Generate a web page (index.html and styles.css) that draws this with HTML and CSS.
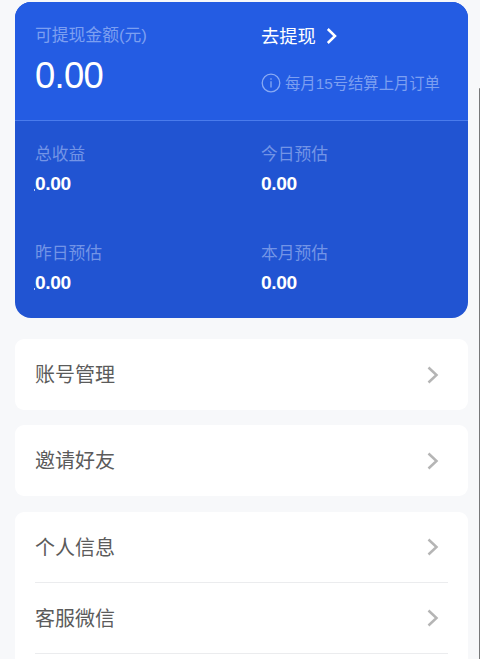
FILE: index.html
```html
<!DOCTYPE html>
<html lang="zh-CN">
<head>
<meta charset="utf-8">
<title>我的收益</title>
<link rel="stylesheet" href="styles.css">
</head>
<body>
<main class="page">
  <section class="wallet">
    <div class="wallet-top">
      <div class="balance">
        <div class="label">可提现金额(元)</div>
        <div class="amount">0.00</div>
      </div>
      <div class="withdraw">
        <div class="withdraw-link">去提现
          <svg class="go" viewBox="0 0 12 18"><path d="M1.8 2l7.2 7-7.2 7"/></svg>
        </div>
        <div class="tip">
          <svg class="info" viewBox="0 0 20 20"><circle cx="10" cy="10" r="8.8"/><path d="M10 8.2v6.4M10 5.2v1.6"/></svg>
          <span>每月15号结算上月订单</span>
        </div>
      </div>
    </div>
    <div class="stats">
      <div class="stat"><div class="label">总收益</div><div class="value dotted">0.00</div></div>
      <div class="stat"><div class="label">今日预估</div><div class="value">0.00</div></div>
      <div class="stat"><div class="label">昨日预估</div><div class="value dotted">0.00</div></div>
      <div class="stat"><div class="label">本月预估</div><div class="value">0.00</div></div>
    </div>
  </section>
  <section class="menu">
    <div class="row"><span>账号管理</span><svg class="arrow" viewBox="0 0 12 18"><path d="M1.5 1.5L9.5 9l-8 7.5"/></svg></div>
  </section>
  <section class="menu">
    <div class="row"><span>邀请好友</span><svg class="arrow" viewBox="0 0 12 18"><path d="M1.5 1.5L9.5 9l-8 7.5"/></svg></div>
  </section>
  <section class="menu menu-long">
    <div class="row"><span>个人信息</span><svg class="arrow" viewBox="0 0 12 18"><path d="M1.5 1.5L9.5 9l-8 7.5"/></svg></div>
    <div class="row"><span>客服微信</span><svg class="arrow" viewBox="0 0 12 18"><path d="M1.5 1.5L9.5 9l-8 7.5"/></svg></div>
  </section>
</main>
<div class="scrollbar"></div>
</body>
</html>
```
FILE: styles.css
```css
* { box-sizing: border-box; }
body {
  margin: 0;
  height: 659px;
  overflow: hidden;
  background: #f7f8fa;
  font-family: "Liberation Sans", "Noto Sans CJK SC", sans-serif;
}
.page { padding: 2px 12px 0 15px; }
svg { display: block; fill: none; flex: none; }

.wallet {
  height: 316px;
  border-radius: 16px;
  overflow: hidden;
  background: #2154d2;
  color: #fff;
}
.wallet-top {
  display: grid;
  grid-template-columns: 226px 1fr;
  height: 119px;
  padding: 22px 0 0 20px;
  background: #245ce3;
  border-bottom: 1px solid #4a7bec;
}
.label {
  font-size: 16.8px;
  line-height: 24px;
  color: #7c9ff1;
}
.amount {
  margin-top: 8px;
  font-size: 36.4px;
  line-height: 40px;
  letter-spacing: -0.7px;
}
.withdraw-link {
  display: flex;
  align-items: center;
  gap: 10px;
  font-size: 18.3px;
  line-height: 26px;
}
.go { width: 12px; height: 18px; margin-top: -2px; stroke: #fff; stroke-width: 2.5; }
.tip {
  display: flex;
  align-items: center;
  gap: 4px;
  margin-top: 22px;
  font-size: 15.35px;
  line-height: 24px;
  letter-spacing: -0.02px;
  color: #7c9ff1;
}
.info { width: 20px; height: 20px; margin-top: -2px; stroke: #88a9f3; stroke-width: 1.3; }

.stats {
  display: grid;
  grid-template-columns: 226px 1fr;
  grid-auto-rows: 98.5px;
  padding: 22px 0 0 20px;
}
.stat .label { color: #7394e6; }
.value {
  margin-top: 5px;
  font-size: 19.2px;
  line-height: 24px;
  letter-spacing: -0.4px;
  font-weight: 700;
}
.dotted { position: relative; }
.dotted::before {
  content: "";
  position: absolute;
  left: -1px;
  top: 17px;
  width: 1px;
  height: 2px;
  background: #b9cbf5;
}

.menu {
  margin-top: 15px;
  padding: 0 20px;
  border-radius: 9px;
  background: #fff;
}
.wallet + .menu { margin-top: 21px; }
.menu-long { height: 170px; margin-top: 16px; }
.row {
  display: flex;
  align-items: center;
  justify-content: space-between;
  height: 71px;
  padding-right: 9px;
  font-size: 20px;
  line-height: 28px;
  color: #5b5b5b;
}
.row span { padding-top: 1px; }
.menu-long .row { border-bottom: 1px solid #ebecee; }
.arrow { width: 12px; height: 18px; stroke: #b5b5b5; stroke-width: 2.5; }

.scrollbar {
  position: absolute;
  top: 88px;
  right: 0;
  bottom: 0;
  width: 1.5px;
  border-radius: 2px 0 0 0;
  background: #777879;
}
```
